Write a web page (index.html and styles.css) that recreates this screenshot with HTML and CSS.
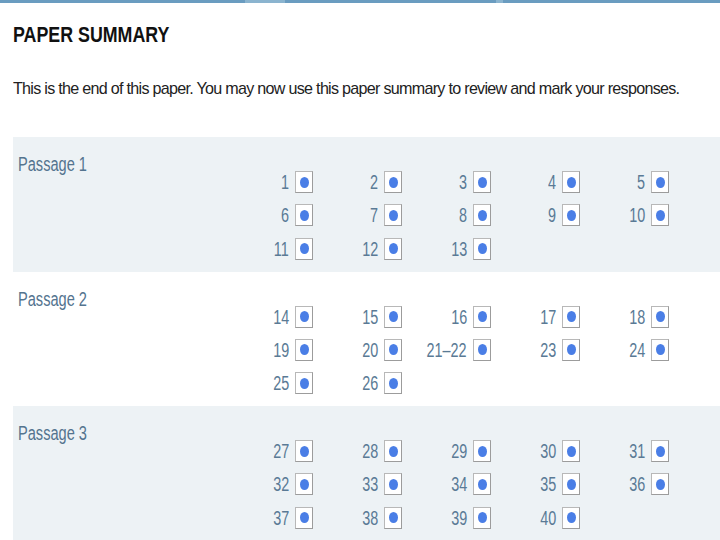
FILE: index.html
```html
<!DOCTYPE html>
<html lang="en">
<head>
    <meta charset="UTF-8">
    <title>Paper Summary</title>
    <link rel="stylesheet" href="styles.css">
</head>
<body>
<div class="topbar"></div>
<div class="page">
    <h1 class="title"><span>PAPER SUMMARY</span></h1>
    <p class="intro"><span>This is the end of this paper. You may now use this paper summary to review and mark your responses.</span></p>

    <div class="passage shaded">
        <div class="passage-name"><span>Passage 1</span></div>
        <div class="questions">
            <div class="q"><span class="num">1</span><span class="box"><i></i></span></div>
            <div class="q"><span class="num">2</span><span class="box"><i></i></span></div>
            <div class="q"><span class="num">3</span><span class="box"><i></i></span></div>
            <div class="q"><span class="num">4</span><span class="box"><i></i></span></div>
            <div class="q"><span class="num">5</span><span class="box"><i></i></span></div>
            <div class="q"><span class="num">6</span><span class="box"><i></i></span></div>
            <div class="q"><span class="num">7</span><span class="box"><i></i></span></div>
            <div class="q"><span class="num">8</span><span class="box"><i></i></span></div>
            <div class="q"><span class="num">9</span><span class="box"><i></i></span></div>
            <div class="q"><span class="num">10</span><span class="box"><i></i></span></div>
            <div class="q"><span class="num">11</span><span class="box"><i></i></span></div>
            <div class="q"><span class="num">12</span><span class="box"><i></i></span></div>
            <div class="q"><span class="num">13</span><span class="box"><i></i></span></div>
        </div>
    </div>

    <div class="passage">
        <div class="passage-name"><span>Passage 2</span></div>
        <div class="questions">
            <div class="q"><span class="num">14</span><span class="box"><i></i></span></div>
            <div class="q"><span class="num">15</span><span class="box"><i></i></span></div>
            <div class="q"><span class="num">16</span><span class="box"><i></i></span></div>
            <div class="q"><span class="num">17</span><span class="box"><i></i></span></div>
            <div class="q"><span class="num">18</span><span class="box"><i></i></span></div>
            <div class="q"><span class="num">19</span><span class="box"><i></i></span></div>
            <div class="q"><span class="num">20</span><span class="box"><i></i></span></div>
            <div class="q"><span class="num">21&ndash;22</span><span class="box"><i></i></span></div>
            <div class="q"><span class="num">23</span><span class="box"><i></i></span></div>
            <div class="q"><span class="num">24</span><span class="box"><i></i></span></div>
            <div class="q"><span class="num">25</span><span class="box"><i></i></span></div>
            <div class="q"><span class="num">26</span><span class="box"><i></i></span></div>
        </div>
    </div>

    <div class="passage shaded">
        <div class="passage-name"><span>Passage 3</span></div>
        <div class="questions">
            <div class="q"><span class="num">27</span><span class="box"><i></i></span></div>
            <div class="q"><span class="num">28</span><span class="box"><i></i></span></div>
            <div class="q"><span class="num">29</span><span class="box"><i></i></span></div>
            <div class="q"><span class="num">30</span><span class="box"><i></i></span></div>
            <div class="q"><span class="num">31</span><span class="box"><i></i></span></div>
            <div class="q"><span class="num">32</span><span class="box"><i></i></span></div>
            <div class="q"><span class="num">33</span><span class="box"><i></i></span></div>
            <div class="q"><span class="num">34</span><span class="box"><i></i></span></div>
            <div class="q"><span class="num">35</span><span class="box"><i></i></span></div>
            <div class="q"><span class="num">36</span><span class="box"><i></i></span></div>
            <div class="q"><span class="num">37</span><span class="box"><i></i></span></div>
            <div class="q"><span class="num">38</span><span class="box"><i></i></span></div>
            <div class="q"><span class="num">39</span><span class="box"><i></i></span></div>
            <div class="q"><span class="num">40</span><span class="box"><i></i></span></div>
        </div>
    </div>
</div>
</body>
</html>
```

FILE: styles.css
```css
* {
    margin: 0;
    padding: 0;
}

body {
    font-family: "Liberation Sans", Arial, sans-serif;
    background-color: #fff;
    overflow: hidden;
}

/* the old page uses a narrow face, so the text is squeezed sideways */
.title span,
.intro span,
.passage-name span {
    display: inline-block;
    white-space: nowrap;
    transform-origin: left center;
}

.topbar {
    height: 3px;
    background: linear-gradient(to right, #6a9cc0 0, #6a9cc0 245px, #8bb4cf 245px, #8bb4cf 285px, #6a9cc0 285px, #6a9cc0 496px, #8bb4cf 496px, #8bb4cf 503px, #6a9cc0 503px);
}

.page {
    padding-left: 13px;
}

.title {
    margin-top: 19px;
    font-size: 22px;
    line-height: 26px;
    font-weight: bold;
    color: #111;
}

.title span {
    transform: scaleX(0.81);
}

.intro {
    margin-top: 31px;
    font-size: 17px;
    line-height: 20px;
    color: #222;
    letter-spacing: -0.75px;
}

.intro span {
    transform: scaleX(0.947);
}

.passage {
    display: flex;
    height: 134.5px;
    padding-right: 51px;
}

.intro + .passage {
    margin-top: 38px;
}

.passage.shaded {
    background-color: #edf2f5;
}

.passage-name {
    flex: 1;
    padding: 15px 0 0 5px;
    font-size: 20px;
    line-height: 24px;
    color: #54748f;
}

.passage-name span {
    transform: scaleX(0.73);
}

.questions {
    display: grid;
    grid-template-columns: repeat(5, 89px);
    grid-auto-rows: 33.4px;
    padding-top: 34px;
}

.q {
    display: flex;
    justify-content: flex-end;
    align-items: flex-start;
    gap: 6px;
}

.num {
    display: inline-block;
    font-size: 20px;
    line-height: 22px;
    color: #5a7a95;
    white-space: nowrap;
    transform: scaleX(0.72);
    transform-origin: right center;
}

.box {
    width: 16px;
    height: 20px;
    border: 1px solid #b8b8b8;
    border-right-color: #9c9c9c;
    border-bottom-color: #9c9c9c;
    background-color: #fff;
    display: flex;
    align-items: center;
    justify-content: center;
}

.box i {
    width: 9px;
    height: 11px;
    border-radius: 50%;
    background-color: #4a7ee6;
}
```
